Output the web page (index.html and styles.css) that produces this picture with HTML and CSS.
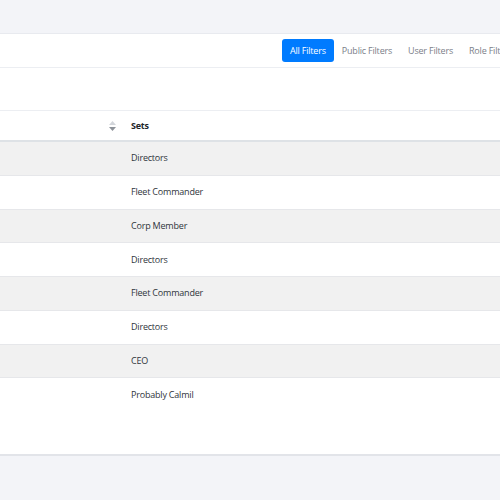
FILE: index.html
```html
<!DOCTYPE html>
<html lang="en">
<head>
    <meta charset="UTF-8">
    <title>Filters</title>
    <link rel="stylesheet" href="styles.css">
</head>
<body>
    <div class="page">
        <div class="card">
            <div class="card-header">
                <ul class="tabs">
                    <li class="active">All Filters</li>
                    <li>Public Filters</li>
                    <li>User Filters</li>
                    <li>Role Filters</li>
                </ul>
            </div>
            <div class="toolbar"></div>
            <table class="sets-table">
                <thead>
                    <tr>
                        <th class="col-name">
                            <span class="sort">
                                <svg width="7" height="10" viewBox="0 0 7 10">
                                    <path d="M3.5 0 L7 4 L0 4 Z" fill="#d3d6db"/>
                                    <path d="M3.5 10 L7 6 L0 6 Z" fill="#8d9299"/>
                                </svg>
                            </span>
                        </th>
                        <th>Sets</th>
                    </tr>
                </thead>
                <tbody>
                    <tr><td></td><td>Directors</td></tr>
                    <tr><td></td><td>Fleet Commander</td></tr>
                    <tr><td></td><td>Corp Member</td></tr>
                    <tr><td></td><td>Directors</td></tr>
                    <tr><td></td><td>Fleet Commander</td></tr>
                    <tr><td></td><td>Directors</td></tr>
                    <tr><td></td><td>CEO</td></tr>
                    <tr><td></td><td>Probably Calmil</td></tr>
                </tbody>
            </table>
        </div>
    </div>
</body>
</html>
```

FILE: styles.css
```css
body {
    margin: 0;
    font-family: "Open Sans", sans-serif;
    letter-spacing: -0.2px;
    background-color: #f3f4f8;
    overflow: hidden;
}
.page {
    padding-top: 33px;
}
.card {
    width: 540px;
    background: white;
    border-top: 1px solid #e8eaef;
    border-bottom: 2px solid #e2e4e9;
}
.card-header {
    height: 33px;
    display: flex;
    align-items: center;
    padding-left: 282px;
    border-bottom: 1px solid #eceef2;
}
.tabs {
    list-style: none;
    margin: 0;
    padding: 0;
    display: flex;
    gap: 0;
}
.tabs li {
    font-size: 9px;
    color: #7b8089;
    padding: 5px 8px;
    border-radius: 3px;
    white-space: nowrap;
}
.tabs li.active {
    background-color: #007bff;
    color: white;
}
.toolbar {
    height: 42px;
    border-bottom: 1px solid #eceef2;
}
.sets-table {
    width: 100%;
    border-collapse: collapse;
}
.sets-table th {
    text-align: left;
    font-size: 9px;
    font-weight: bold;
    color: #212529;
    height: 29px;
    padding: 0 11px;
    border-bottom: 2px solid #dee2e6;
}
.sets-table th.col-name {
    width: 105px;
    text-align: right;
    padding-right: 4px;
}
.sort svg {
    display: block;
    margin-left: auto;
}
.sets-table td {
    font-size: 9px;
    color: #2f353b;
    height: 31.75px;
    padding: 0 11px 1px;
    border-bottom: 1px solid #e6e7ea;
}
.sets-table tbody tr:nth-child(odd) {
    background-color: #f1f1f1;
}
.sets-table tbody tr:last-child td {
    border-bottom: none;
    vertical-align: top;
    height: 65px;
    padding-top: 10px;
}
```
